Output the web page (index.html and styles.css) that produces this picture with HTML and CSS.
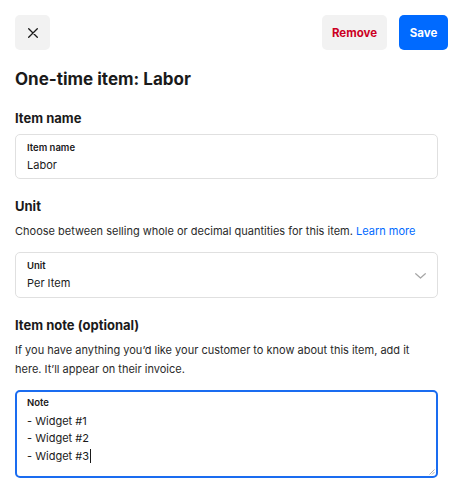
FILE: index.html
```html
<!DOCTYPE html>
<html lang="en">
<head>
<meta charset="utf-8">
<title>One-time item: Labor</title>
<link rel="stylesheet" href="styles.css">
</head>
<body>
<div class="page">
  <header class="topbar">
    <button class="btn btn-close" aria-label="Close">
      <svg width="10" height="10" viewBox="0 0 10 10" aria-hidden="true"><path d="M0.7 0.7 L9.3 9.3 M9.3 0.7 L0.7 9.3" stroke="#1a1a1a" stroke-width="1.3" fill="none" stroke-linecap="round"/></svg>
    </button>
    <div class="actions">
      <button class="btn btn-remove">Remove</button>
      <button class="btn btn-save">Save</button>
    </div>
  </header>

  <main class="form">
    <h1 class="title">One-time item: Labor</h1>

    <section class="section">
      <h2 class="heading">Item name</h2>
      <div class="field field-text">
        <div class="field-label">Item name</div>
        <div class="field-value">Labor</div>
      </div>
    </section>

    <section class="section">
      <h2 class="heading">Unit</h2>
      <p class="desc">Choose between selling whole or decimal quantities for this item. <a class="link" href="#">Learn more</a></p>
      <div class="field field-select">
        <div class="field-body">
          <div class="field-label">Unit</div>
          <div class="field-value">Per Item</div>
        </div>
        <svg class="chevron" width="11" height="6" viewBox="0 0 11 6" aria-hidden="true"><path d="M0.7 0.7 L5.5 5 L10.3 0.7" stroke="#a6a6a6" stroke-width="1.2" fill="none" stroke-linecap="round" stroke-linejoin="round"/></svg>
      </div>
    </section>

    <section class="section">
      <h2 class="heading">Item note (optional)</h2>
      <p class="desc">If you have anything you’d like your customer to know about this item, add it here. It’ll appear on their invoice.</p>
      <div class="field field-note">
        <div class="field-label">Note</div>
        <div class="note-lines">
          <div class="field-value">- Widget #1</div>
          <div class="field-value">- Widget #2</div>
          <div class="field-value">- Widget #3<span class="caret"></span></div>
        </div>
        <svg class="grip" width="6" height="6" viewBox="0 0 6 6" aria-hidden="true"><path d="M5.5 0.5 L0.5 5.5 M5.5 3 L3 5.5" stroke="#9a9a9a" stroke-width="0.8"/></svg>
      </div>
    </section>
  </main>
</div>
</body>
</html>
```

FILE: styles.css
```css
* { box-sizing: border-box; }
html, body { margin: 0; padding: 0; background: #fff; }
body {
  font-family: Inter, "Noto Sans", "Liberation Sans", sans-serif;
  color: #1a1a1a;
}
.page { padding: 15px 11px 0 15px; }

.topbar {
  display: flex;
  justify-content: space-between;
  align-items: center;
  height: 35px;
}
.actions { display: flex; gap: 12px; }
.btn {
  border: 0;
  height: 35px;
  border-radius: 5px;
  font-family: inherit;
  font-size: 11.5px;
  font-weight: 700;
  display: flex;
  align-items: center;
  justify-content: center;
  padding: 0;
}
.btn-close { width: 35px; background: #f2f2f2; }
.btn-remove { width: 65px; background: #f2f2f2; color: #cc0023; }
.btn-save { width: 49px; background: #006aff; color: #fff; }

.form { margin-right: 10px; }
.title {
  margin: 17px 0 0;
  font-size: 17px;
  line-height: 24px;
  font-weight: 700;
}
.section { margin-top: 17px; display: flex; flex-direction: column; }
.heading {
  margin: 0 0 6px;
  font-size: 13px;
  line-height: 20px;
  font-weight: 700;
}
.desc {
  margin: 0 0 10px;
  font-size: 11px;
  line-height: 19.5px;
  color: #2a2a2a;
}
.link { color: #006aff; text-decoration: none; }

.field {
  border: 1px solid #e0e0e0;
  border-radius: 5px;
  padding: 6px 11px 3px;
  position: relative;
}
.field-text { height: 45px; }
.field-label {
  font-size: 9.5px;
  line-height: 14px;
  font-weight: 600;
  color: #1a1a1a;
}
.field-value {
  font-size: 11px;
  line-height: 20px;
  color: #1a1a1a;
}
.field-select {
  display: flex;
  align-items: center;
  justify-content: space-between;
  height: 46px;
  padding: 6px 11px 4px;
}
.field-note {
  border: 2px solid #1a6cf0;
  padding: 4px 10px 14px;
  height: 88px;
}
.note-lines { margin-top: 3px; }
.note-lines .field-value { line-height: 17.5px; }
.caret {
  display: inline-block;
  width: 1px;
  height: 14px;
  background: #1a1a1a;
  vertical-align: -3px;
  margin-left: 1px;
}
.grip { position: absolute; right: 1px; bottom: 1px; }
```
